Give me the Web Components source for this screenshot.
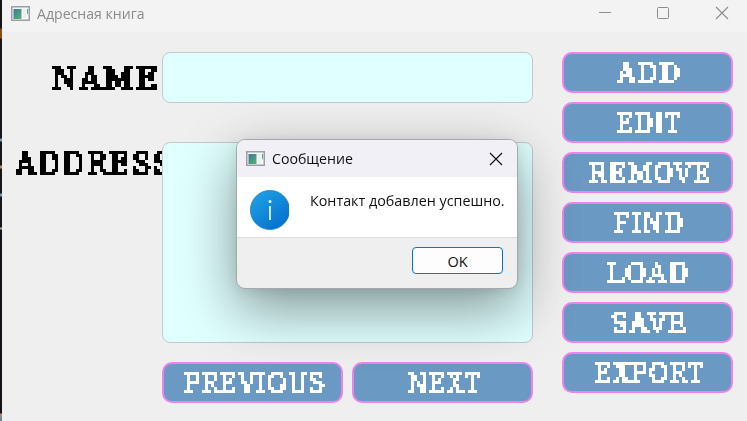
<!DOCTYPE html>
<html lang="ru"><head><meta charset="utf-8"><title>Адресная книга</title>
<style>html,body{margin:0;width:747px;height:421px;overflow:hidden;background:#efefef;font-family:"Open Sans","Noto Sans",sans-serif}</style></head>
<body><address-app></address-app>
<script>
const define=(name,html,init)=>customElements.define(name,class extends HTMLElement{
  constructor(){super();this.attachShadow({mode:'open'}).innerHTML=html;}
  connectedCallback(){if(init)init(this,this.shadowRoot);}
});
// One line of text whose advance is scaled to the width attribute.
define('fit-text',`<style>:host{display:block;white-space:nowrap;flex:none;line-height:1}span{display:inline-block;transform-origin:0 50%;line-height:inherit}</style><span></span>`,(h,r)=>{
  const s=r.querySelector('span');s.textContent=h.getAttribute('text');
  const w=+h.getAttribute('width');h.style.width=w+'px';
  const ls=parseFloat(getComputedStyle(s).letterSpacing)||0;
  s.style.transform=`scaleX(${w/(s.offsetWidth-ls)})`;
});
// Blocky slab lettering: text sampled on a 3px grid.
define('pixel-text',`<style>:host{display:block;flex:none;height:var(--h,21px)}
div{height:100%;filter:url(#px)}
fit-text{font:400 var(--fs,27px)/var(--h,21px) "DejaVu Serif",serif;line-height:var(--h,21px);letter-spacing:var(--ls,2px);-webkit-text-stroke:var(--st,1.5px) currentColor;transform:translateY(1px)}
svg{position:absolute;width:0;height:0}</style>
<svg></svg><div></div>`,(h,r)=>{
  const w=+h.getAttribute('width');h.style.width=w+'px';
  const H=+(h.getAttribute('cap')||21);
  r.querySelector('svg').innerHTML=`<filter id="px" filterUnits="userSpaceOnUse" x="0" y="0" width="${w}" height="${H}" color-interpolation-filters="sRGB">
  <feFlood x="1" y="1" width="1" height="1" flood-color="#000"/>
  <feOffset x="0" y="0" width="3" height="3"/><feTile result="dots"/>
  <feComposite in="SourceGraphic" in2="dots" operator="in"/>
  <feComponentTransfer><feFuncA type="discrete" tableValues="0 1"/></feComponentTransfer>
  <feMorphology operator="dilate" radius="1"/></filter>`;
  r.querySelector('div').innerHTML=`<fit-text text="${h.getAttribute('text')}" width="${w}"></fit-text>`;
});
define('app-button',`<style>:host{display:flex;box-sizing:border-box;width:var(--w,171px);height:41px;border:2px solid #ee82ee;border-radius:10px;background:#6a99c3;color:#fff;padding-top:8px}
pixel-text{margin-left:var(--l)}</style>`,(h,r)=>{
  h.style.setProperty('--l',h.getAttribute('inset')+'px');
  r.innerHTML+=`<pixel-text text="${h.getAttribute('text')}" width="${h.getAttribute('ink')}"></pixel-text>`;
});
define('app-icon',`<style>:host{display:block;flex:none;width:19px;height:15px}svg{display:block}</style>
<svg width="19" height="15"><defs><linearGradient id="g" x2="1" y2="1"><stop stop-color="#3f7898"/><stop offset="1" stop-color="#56b278"/></linearGradient></defs>
<rect x=".75" y=".75" width="17.5" height="13.5" fill="#f7f7f7" stroke="#9a9fa4" stroke-width="1.5"/><rect x="2.5" y="3" width="8" height="10" fill="url(#g)"/><path d="M12 3h3v9h-3z" fill="#eceeef"/><path d="M16 3h1v6l-1-2z" fill="#4ca58b"/></svg>`);
define('text-field',`<style>:host{display:block;box-sizing:border-box;width:371px;background:#e0ffff;border:1px solid #c3c8c8;border-radius:8px}</style>`);
define('title-bar',`<style>:host{display:flex;align-items:center;box-sizing:border-box;height:32px;background:#f3f3f3;color:#8b8b8b;padding:0 18px 6px 9px}
fit-text{margin-left:7px;font-size:14.5px;line-height:20px;margin-top:2px}svg{margin-left:auto}</style>
<app-icon></app-icon><fit-text text="Адресная книга" width="108"></fit-text>
<svg width="131" height="14" fill="none" stroke="#8c8c8c"><path d="M1 6.5h12"/><rect x="59.5" y="1.5" width="11" height="11" rx="1"/><path d="M118 1l12 12m0-12l-12 12" stroke-width="1.1"/></svg>`);
define('message-dialog',`<style>:host{display:flex;flex-direction:column;box-sizing:border-box;width:282px;height:150px;border:1px solid #a5a9aa;border-radius:9px;overflow:hidden;background:#efefef;color:#111;box-shadow:0 20px 56px rgba(0,0,0,.42),0 2px 12px rgba(0,0,0,.08)}
header{display:flex;align-items:center;height:37px;background:#f1f0f7;padding:0 14px 0 9px}
header fit-text{margin-left:7px;font-size:14.5px;line-height:20px}header svg{margin-left:auto}
main{display:flex;align-items:flex-start;box-sizing:border-box;height:61px;background:#fff;border-bottom:1px solid #dcdcdc;padding:13px}
main fit-text{font-size:14.5px;line-height:20px;margin:1px 0 0 20.5px}
footer{display:flex;justify-content:flex-end;padding:9px 14px}
button{display:flex;align-items:center;justify-content:center;box-sizing:border-box;width:91px;height:27px;border:1px solid #0078d4;border-radius:4px;background:#fdfdfd;padding:0;font-family:inherit;color:#111}
button fit-text{font-size:14.5px;line-height:20px;margin-top:2px}</style>
<header><app-icon></app-icon><fit-text text="Сообщение" width="81"></fit-text><svg width="14" height="14" stroke="#111" stroke-width="1.2"><path d="M1 1l12 12m0-12L1 13"/></svg></header>
<main><svg width="41" height="40"><defs><linearGradient id="i" x1=".15" y1=".1" x2=".8" y2=".9"><stop stop-color="#1d9fe3"/><stop offset="1" stop-color="#0672cf"/></linearGradient></defs><circle cx="20" cy="20" r="19.6" fill="url(#i)" stroke="#1577bd" stroke-width=".7"/><circle cx="20" cy="11.5" r="1.5" fill="#fff"/><path d="M20 16v14" stroke="#fff" stroke-width="1.6"/></svg>
<fit-text text="Контакт добавлен успешно." width="194.5"></fit-text></main>
<footer><button><fit-text text="OK" width="20"></fit-text></button></footer>`);
define('address-app',`<style>:host{display:flex;width:747px;height:421px;position:relative}
aside{width:2px;flex:none;background:linear-gradient(#161616 28px,#8a4c0a 29px 38px,#14161c 39px 138px,#7d99ac 139px 141px,#14161c 142px 165px,#b18f6c 166px 168px,#14161c 169px 193px,#7597b1 194px 196px,#14161c 197px 227px,#aaa 228px 229px,#121218 230px 413px,#b18f6c 414px,#5583a4)}
section{flex:1}
main{display:grid;grid-template-columns:160px 371px 171px;column-gap:0;padding-top:20px}
.side{display:flex;flex-direction:column;gap:9px;margin-left:29px}
.labels{overflow:hidden;color:#000;--h:24px;--fs:30.5px;--ls:3px;--st:2.3px;height:340px}
.labels pixel-text:first-child{margin:14px 0 0 50px}.labels pixel-text:last-child{margin:61px 0 0 14px}
.nav{display:flex;gap:9px;margin-top:19px;--w:181px}
message-dialog{position:absolute;left:236px;top:139px}</style>
<aside></aside><section><title-bar></title-bar><main>
<div class="labels"><pixel-text text="NAME" width="105" cap="24"></pixel-text><pixel-text text="ADDRESS" width="155" cap="24"></pixel-text></div>
<div><text-field style="height:51px"></text-field><text-field style="height:201px;margin-top:39px"></text-field>
<div class="nav"><app-button text="PREVIOUS" inset="20" ink="141"></app-button><app-button text="NEXT" inset="54" ink="72"></app-button></div></div>
<div class="side"><app-button text="ADD" inset="53" ink="63"></app-button><app-button text="EDIT" inset="53" ink="63"></app-button><app-button text="REMOVE" inset="25" ink="122"></app-button><app-button text="FIND" inset="50" ink="69"></app-button><app-button text="LOAD" inset="43" ink="81"></app-button><app-button text="SAVE" inset="47" ink="75"></app-button><app-button text="EXPORT" inset="31" ink="108"></app-button></div>
</main></section><message-dialog></message-dialog>`);
</script></body></html>
